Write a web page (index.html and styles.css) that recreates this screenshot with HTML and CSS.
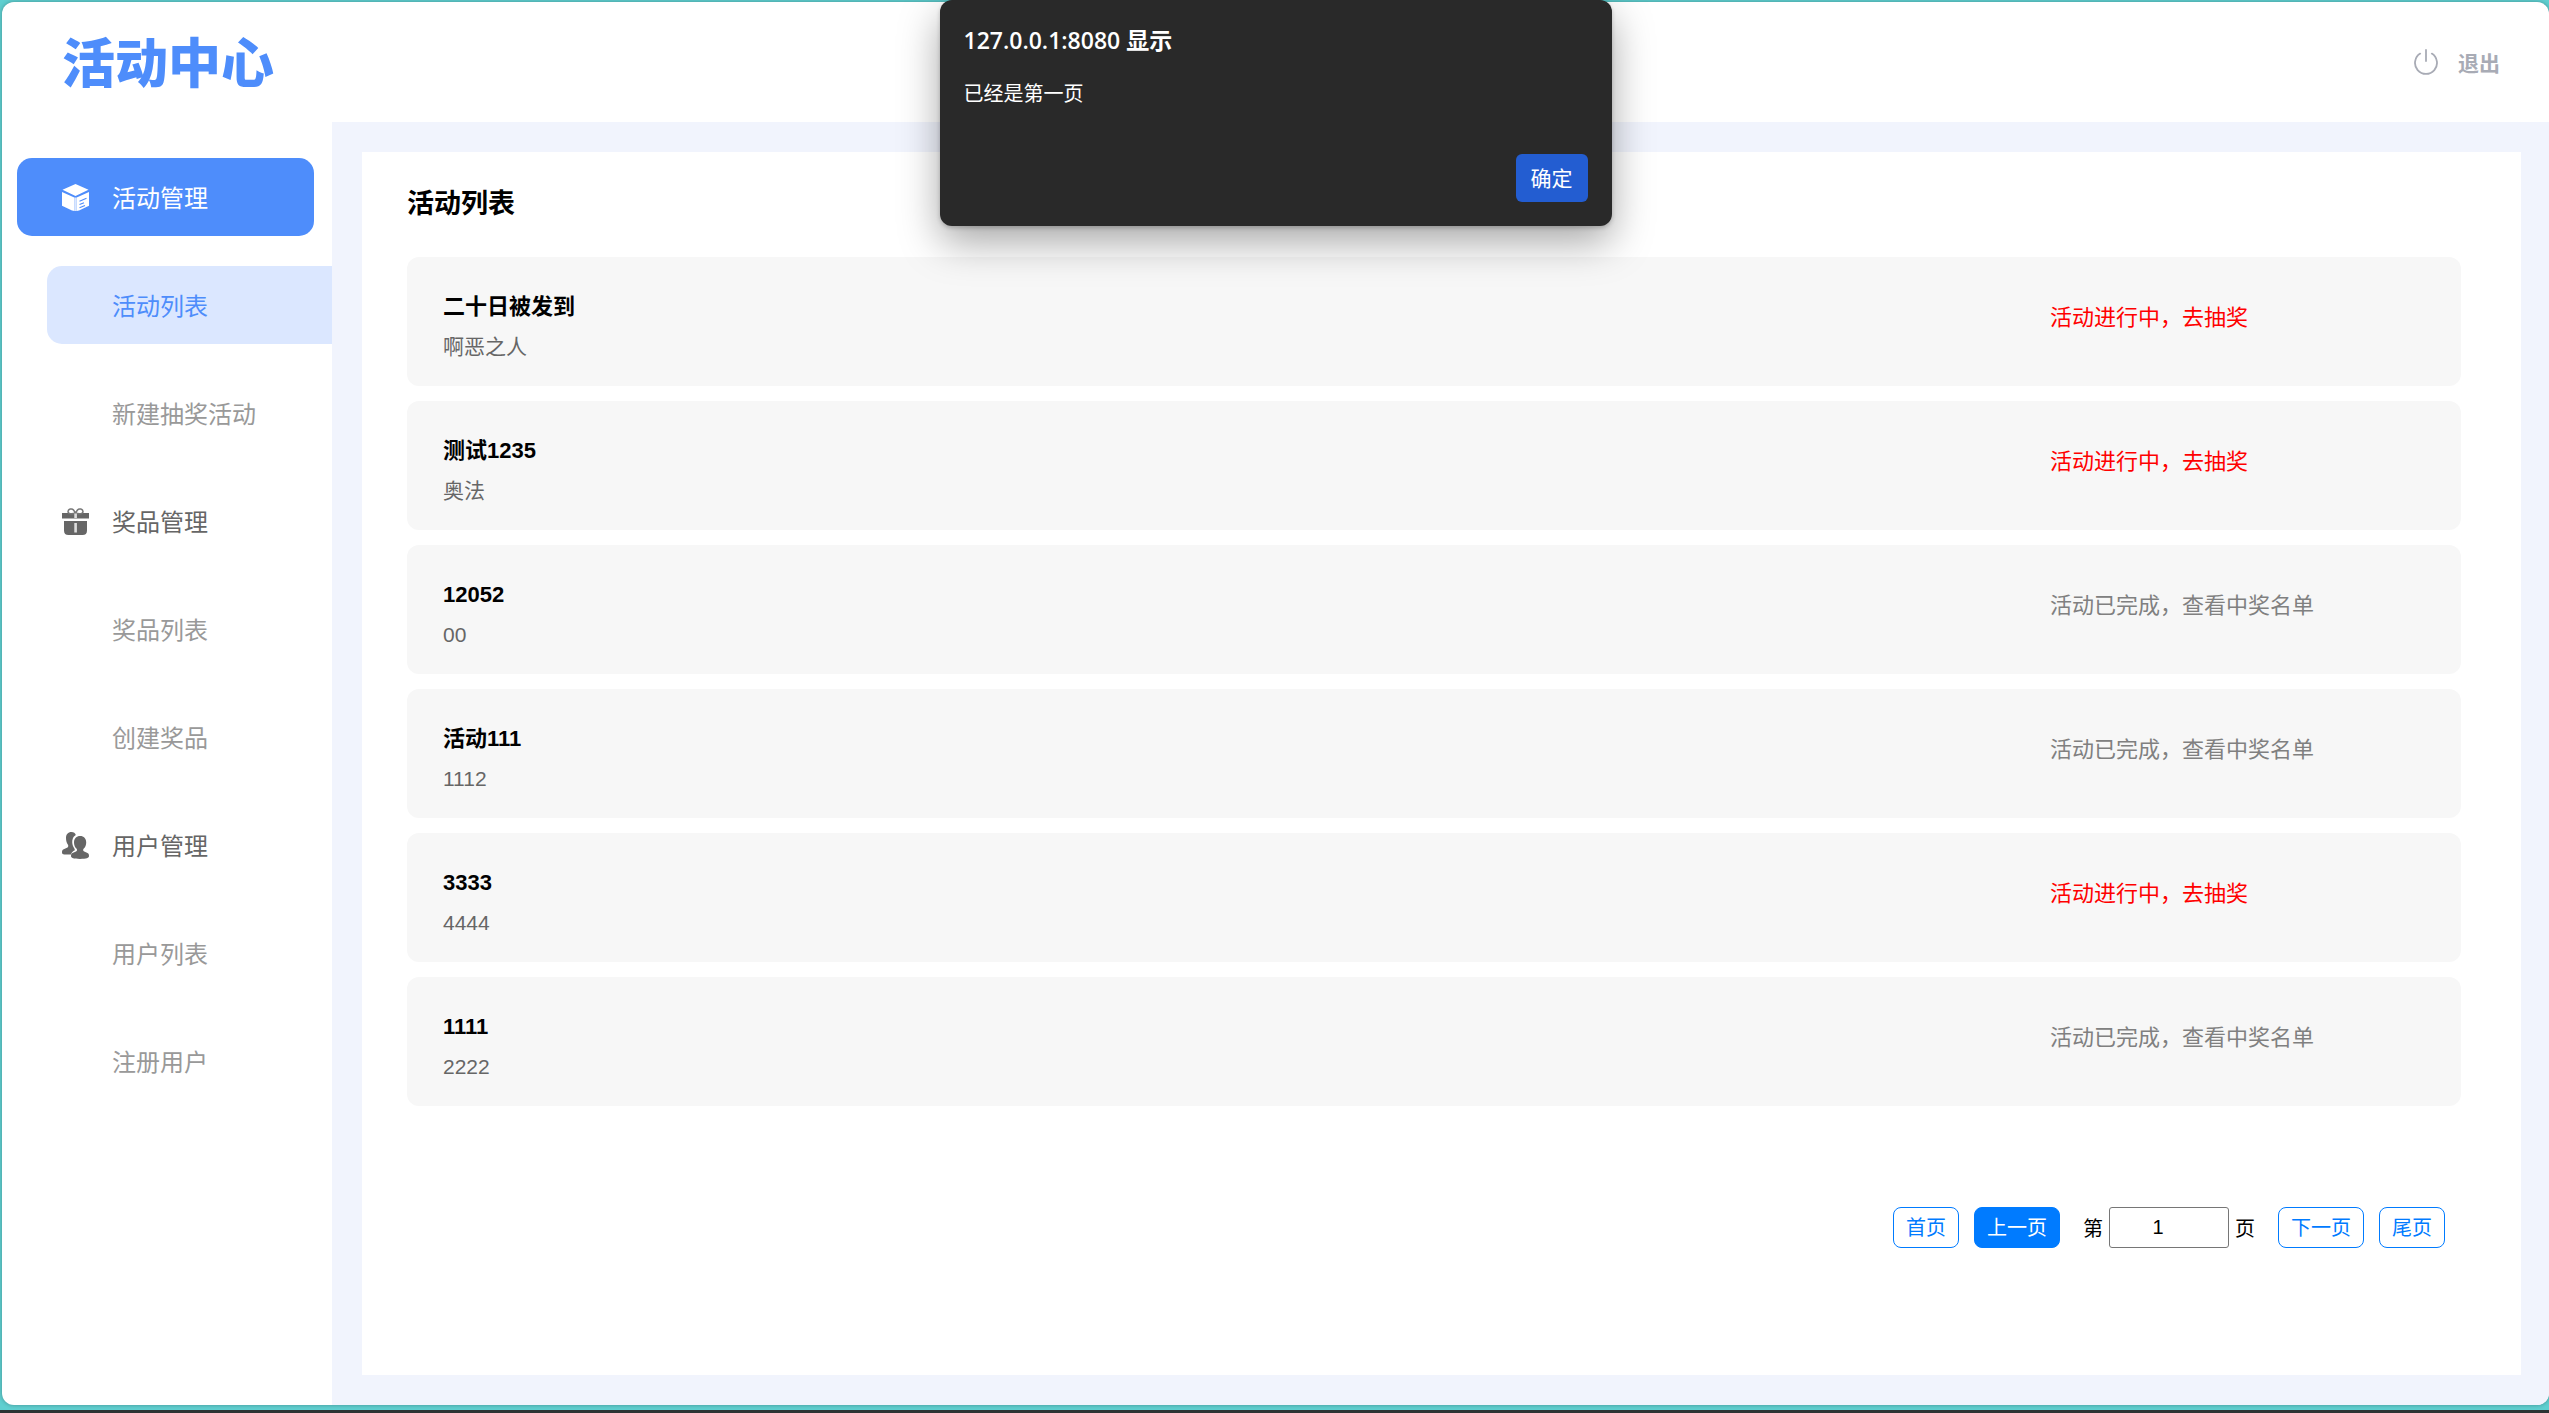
FILE: index.html
```
<!DOCTYPE html>
<html lang="zh-CN">
<head>
  <meta charset="UTF-8">
  <meta name="viewport" content="width=device-width, initial-scale=1">
  <title>活动中心</title>
  <link rel="stylesheet" href="styles.css">
</head>
<body>
  <div class="app">
    <header class="header">
      <div class="logo">活动中心</div>
      <a class="logout" href="#">
        <svg class="logout-icon" width="24" height="26" viewBox="0 0 24 26" fill="none" stroke="currentColor" stroke-width="1.800" stroke-linecap="round" aria-hidden="true">
          <path d="M12 1v11M6.200 4.600a11 11 0 1 0 11.600 0"/>
        </svg>
        <span>退出</span>
      </a>
    </header>

    <div class="body">
      <nav class="sidebar">
        <a class="nav-group nav-group-active" href="#">
          <svg class="nav-icon" viewBox="0 0 27 27" aria-hidden="true">
            <path fill="#fff" d="M13.500 0 26.500 5.800 13.500 12 .5 5.800zM0 8l12.300 5.600V27L10 26.500 0 21.800zM27 8l-12.300 5.600V27l2.300-.5 10-4.700z"/>
            <path fill="#fff" opacity=".8" d="M12.300 13.600h2.400V27h-2.400z"/>
            <path stroke="#4e8dfb" stroke-width="1.100" fill="none" d="M17.500 17.300l7-3M17.500 20.600l4.500-1.900M17.500 23.800l5.500-2.400"/>
          </svg>
          <span class="nav-label">活动管理</span>
        </a>
        <a class="nav-item nav-item-active" href="#">活动列表</a>
        <a class="nav-item" href="#">新建抽奖活动</a>
        <a class="nav-group" href="#">
          <svg class="nav-icon" viewBox="0 0 27 27" aria-hidden="true">
            <path fill="#666" d="M0 5h27v5.500H0zM2 13h23v9.500c0 3-1.500 4.500-4.500 4.500h-14C3.500 27 2 25.500 2 22.500z"/>
            <path fill="none" stroke="#777" stroke-width="1.500" d="M13.500 5C9.500 6.500 6 6 6 3.500S10 0 11.500 2L13.500 5l2-3C17 0 21 1 21 3.500S17.500 6.500 13.500 5z"/>
            <path fill="#ddd" d="M12.300 5.500h2.600V10h-2.600zM12.300 15h2.600v9.500h-2.600z"/>
          </svg>
          <span class="nav-label">奖品管理</span>
        </a>
        <a class="nav-item" href="#">奖品列表</a>
        <a class="nav-item" href="#">创建奖品</a>
        <a class="nav-group" href="#">
          <svg class="nav-icon" viewBox="0 0 27 27" aria-hidden="true">
            <path fill="#666" d="M9.500 0C6 0 4 2.400 4 6c0 2.800.7 5 1.800 6.500.9 1.300.6 2.600-.8 3.300L1.200 17.500C.2 18 0 19 0 20.500c0 1.200.8 2 2.300 2H9c.5-2.200 2-3.300 3.500-4 .8-.5-.1-2-.9-3.200C10.500 13.500 10 11 10.300 8.600 10.700 5.700 12 4 13.800 3 13.300 1 11.700 0 9.500 0z"/>
            <path fill="#666" d="M18.200 4c3.600 0 6 2.600 6 6.400 0 2.600-.9 4.700-2.400 6.200-1 1-.8 2.400.4 3l3.300 1.500c1.100.5 1.500 1.400 1.500 3 0 1.900-2.500 2.900-9 2.900s-9-1-9-2.900c0-1.600.4-2.500 1.500-3l3.500-1.500c1.200-.6 1.400-2 .4-3-1.500-1.500-2.400-3.600-2.400-6.200C12 6.600 14.500 4 18.200 4z"/>
          </svg>
          <span class="nav-label">用户管理</span>
        </a>
        <a class="nav-item" href="#">用户列表</a>
        <a class="nav-item" href="#">注册用户</a>
      </nav>

      <main class="content">
        <section class="panel">
          <h1 class="panel-title">活动列表</h1>
          <ul class="activity-list">
            <li class="activity">
              <div class="activity-info"><h2 class="activity-name">二十日被发到</h2><p class="activity-desc">啊恶之人</p></div>
              <a class="activity-status activity-status-open" href="#">活动进行中，去抽奖</a>
            </li>
            <li class="activity">
              <div class="activity-info"><h2 class="activity-name">测试1235</h2><p class="activity-desc">奥法</p></div>
              <a class="activity-status activity-status-open" href="#">活动进行中，去抽奖</a>
            </li>
            <li class="activity">
              <div class="activity-info"><h2 class="activity-name">12052</h2><p class="activity-desc">00</p></div>
              <a class="activity-status" href="#">活动已完成，查看中奖名单</a>
            </li>
            <li class="activity">
              <div class="activity-info"><h2 class="activity-name">活动111</h2><p class="activity-desc">1112</p></div>
              <a class="activity-status" href="#">活动已完成，查看中奖名单</a>
            </li>
            <li class="activity">
              <div class="activity-info"><h2 class="activity-name">3333</h2><p class="activity-desc">4444</p></div>
              <a class="activity-status activity-status-open" href="#">活动进行中，去抽奖</a>
            </li>
            <li class="activity">
              <div class="activity-info"><h2 class="activity-name">1111</h2><p class="activity-desc">2222</p></div>
              <a class="activity-status" href="#">活动已完成，查看中奖名单</a>
            </li>
          </ul>
          <div class="pagination">
            <button class="page-btn" type="button">首页</button>
            <button class="page-btn page-btn-active" type="button">上一页</button>
            <label class="page-jump">第<input class="page-input" type="text" inputmode="numeric" value="1">页</label>
            <button class="page-btn" type="button">下一页</button>
            <button class="page-btn" type="button">尾页</button>
          </div>
        </section>
      </main>
    </div>
  </div>

  <dialog class="alert" open aria-labelledby="alert-title">
    <h2 class="alert-title" id="alert-title">127.0.0.1:8080 显示</h2>
    <p class="alert-message">已经是第一页</p>
    <button class="alert-ok" type="button">确定</button>
  </dialog>
</body>
</html>
```
FILE: styles.css
```
* {
  box-sizing: border-box;
}

body {
  display: flex;
  flex-direction: column;
  min-height: 100vh;
  margin: 0;
  padding: 2px 0 5px 2px;
  border-bottom: 3px solid #2c3333;
  background: #5fcfd0;
  font-family: "Liberation Sans", "Noto Sans CJK SC", sans-serif;
  color: #000;
}

h1,
h2,
p,
ul {
  margin: 0;
  padding: 0;
}

a {
  color: inherit;
  text-decoration: none;
}

button,
input {
  font-family: inherit;
}

.app {
  display: flex;
  flex: 1;
  flex-direction: column;
  overflow: hidden;
  border-radius: 12px;
  background: #fff;
  box-shadow: 0 0 4px rgba(0, 0, 0, 0.3);
}

/* Header */

.header {
  display: flex;
  align-items: center;
  justify-content: space-between;
  height: 120px;
  padding: 0 49px 0 60px;
}

.logo {
  padding-bottom: 4px;
  color: #4e8dfb;
  font-family: "Noto Sans CJK SC", sans-serif;
  font-size: 53px;
  font-weight: 900;
  line-height: 60px;
}

.logout {
  display: flex;
  align-items: center;
  gap: 20px;
  color: #a8abb5;
  font-size: 21px;
  font-weight: 700;
}

/* Sidebar */

.body {
  display: flex;
  flex: 1;
}

.sidebar {
  display: flex;
  flex: 0 0 330px;
  flex-direction: column;
  gap: 30px;
  padding: 36px 0;
  font-size: 24px;
}

.nav-group,
.nav-item {
  display: flex;
  align-items: center;
  height: 78px;
}

.nav-group {
  gap: 23px;
  margin: 0 18px 0 15px;
  padding-left: 45px;
  border-radius: 15px;
  color: #666;
}

.nav-group-active {
  background: #4e8dfb;
  color: #fff;
}

.nav-icon {
  width: 27px;
  height: 27px;
}

.nav-label,
.nav-item {
  padding-bottom: 2px;
}

.nav-item {
  margin-left: 45px;
  padding-left: 65px;
  border-radius: 15px 0 0 15px;
  color: #999;
}

.nav-item-active {
  background: #dbe7ff;
  color: #4e8dfb;
}

/* Content */

.content {
  display: flex;
  flex: 1;
  padding: 30px 28px 30px 30px;
  background: #f1f4fd;
}

.panel {
  flex: 1;
  padding: 32px 60px 30px 45px;
  background: #fff;
}

.panel-title {
  margin-bottom: 33px;
  font-size: 27px;
  line-height: 40px;
}

.activity-list {
  display: flex;
  flex-direction: column;
  gap: 15px;
  list-style: none;
}

.activity {
  display: flex;
  align-items: center;
  justify-content: space-between;
  padding: 32px 36px 23px;
  border-radius: 12px;
  background: #f7f7f7;
}

.activity-name {
  margin-bottom: 6px;
  font-size: 22px;
  line-height: 36px;
}

.activity-desc {
  color: #666;
  font-size: 21px;
  line-height: 32px;
}

.activity-status {
  flex: 0 0 375px;
  padding-bottom: 16px;
  color: #808080;
  font-size: 22px;
  line-height: 34px;
}

.activity-status-open {
  color: #f00;
}

/* Pagination */

.pagination {
  display: flex;
  align-items: center;
  justify-content: flex-end;
  gap: 15px;
  margin-top: 101px;
  padding-right: 16px;
  font-size: 20px;
}

.page-btn {
  height: 41px;
  padding: 0 12px 2px;
  border: 1px solid #007bff;
  border-radius: 8px;
  background: #fff;
  color: #007bff;
  font-size: 20px;
}

.page-btn-active {
  background: #007bff;
  color: #fff;
}

.page-jump {
  display: flex;
  align-items: center;
  gap: 6px;
  margin: 0 8px;
}

.page-input {
  width: 120px;
  height: 41px;
  padding: 0 22px 0 0;
  border: 1px solid #767676;
  border-radius: 3px;
  font-size: 20px;
  text-align: center;
}

/* Alert dialog */

.alert {
  position: absolute;
  top: 0;
  left: 2px;
  right: 0;
  display: flex;
  flex-direction: column;
  width: 672px;
  margin: 0 auto;
  padding: 24px;
  border: 0;
  border-radius: 12px;
  background: #292929;
  box-shadow: 0 16px 40px rgba(0, 0, 0, 0.35), 0 2px 4px rgba(0, 0, 0, 0.2);
  color: #fff;
  font-family: "Open Sans", "Noto Sans CJK SC", sans-serif;
}

.alert-title {
  margin-bottom: 24px;
  font-size: 23px;
  font-weight: 600;
  line-height: 32px;
}

.alert-message {
  margin-bottom: 46px;
  font-size: 20px;
  line-height: 28px;
}

.alert-ok {
  align-self: flex-end;
  width: 72px;
  height: 48px;
  padding: 0 0 3px;
  border: 0;
  border-radius: 6px;
  background: #235dd1;
  color: #fff;
  font-size: 21px;
}
```
